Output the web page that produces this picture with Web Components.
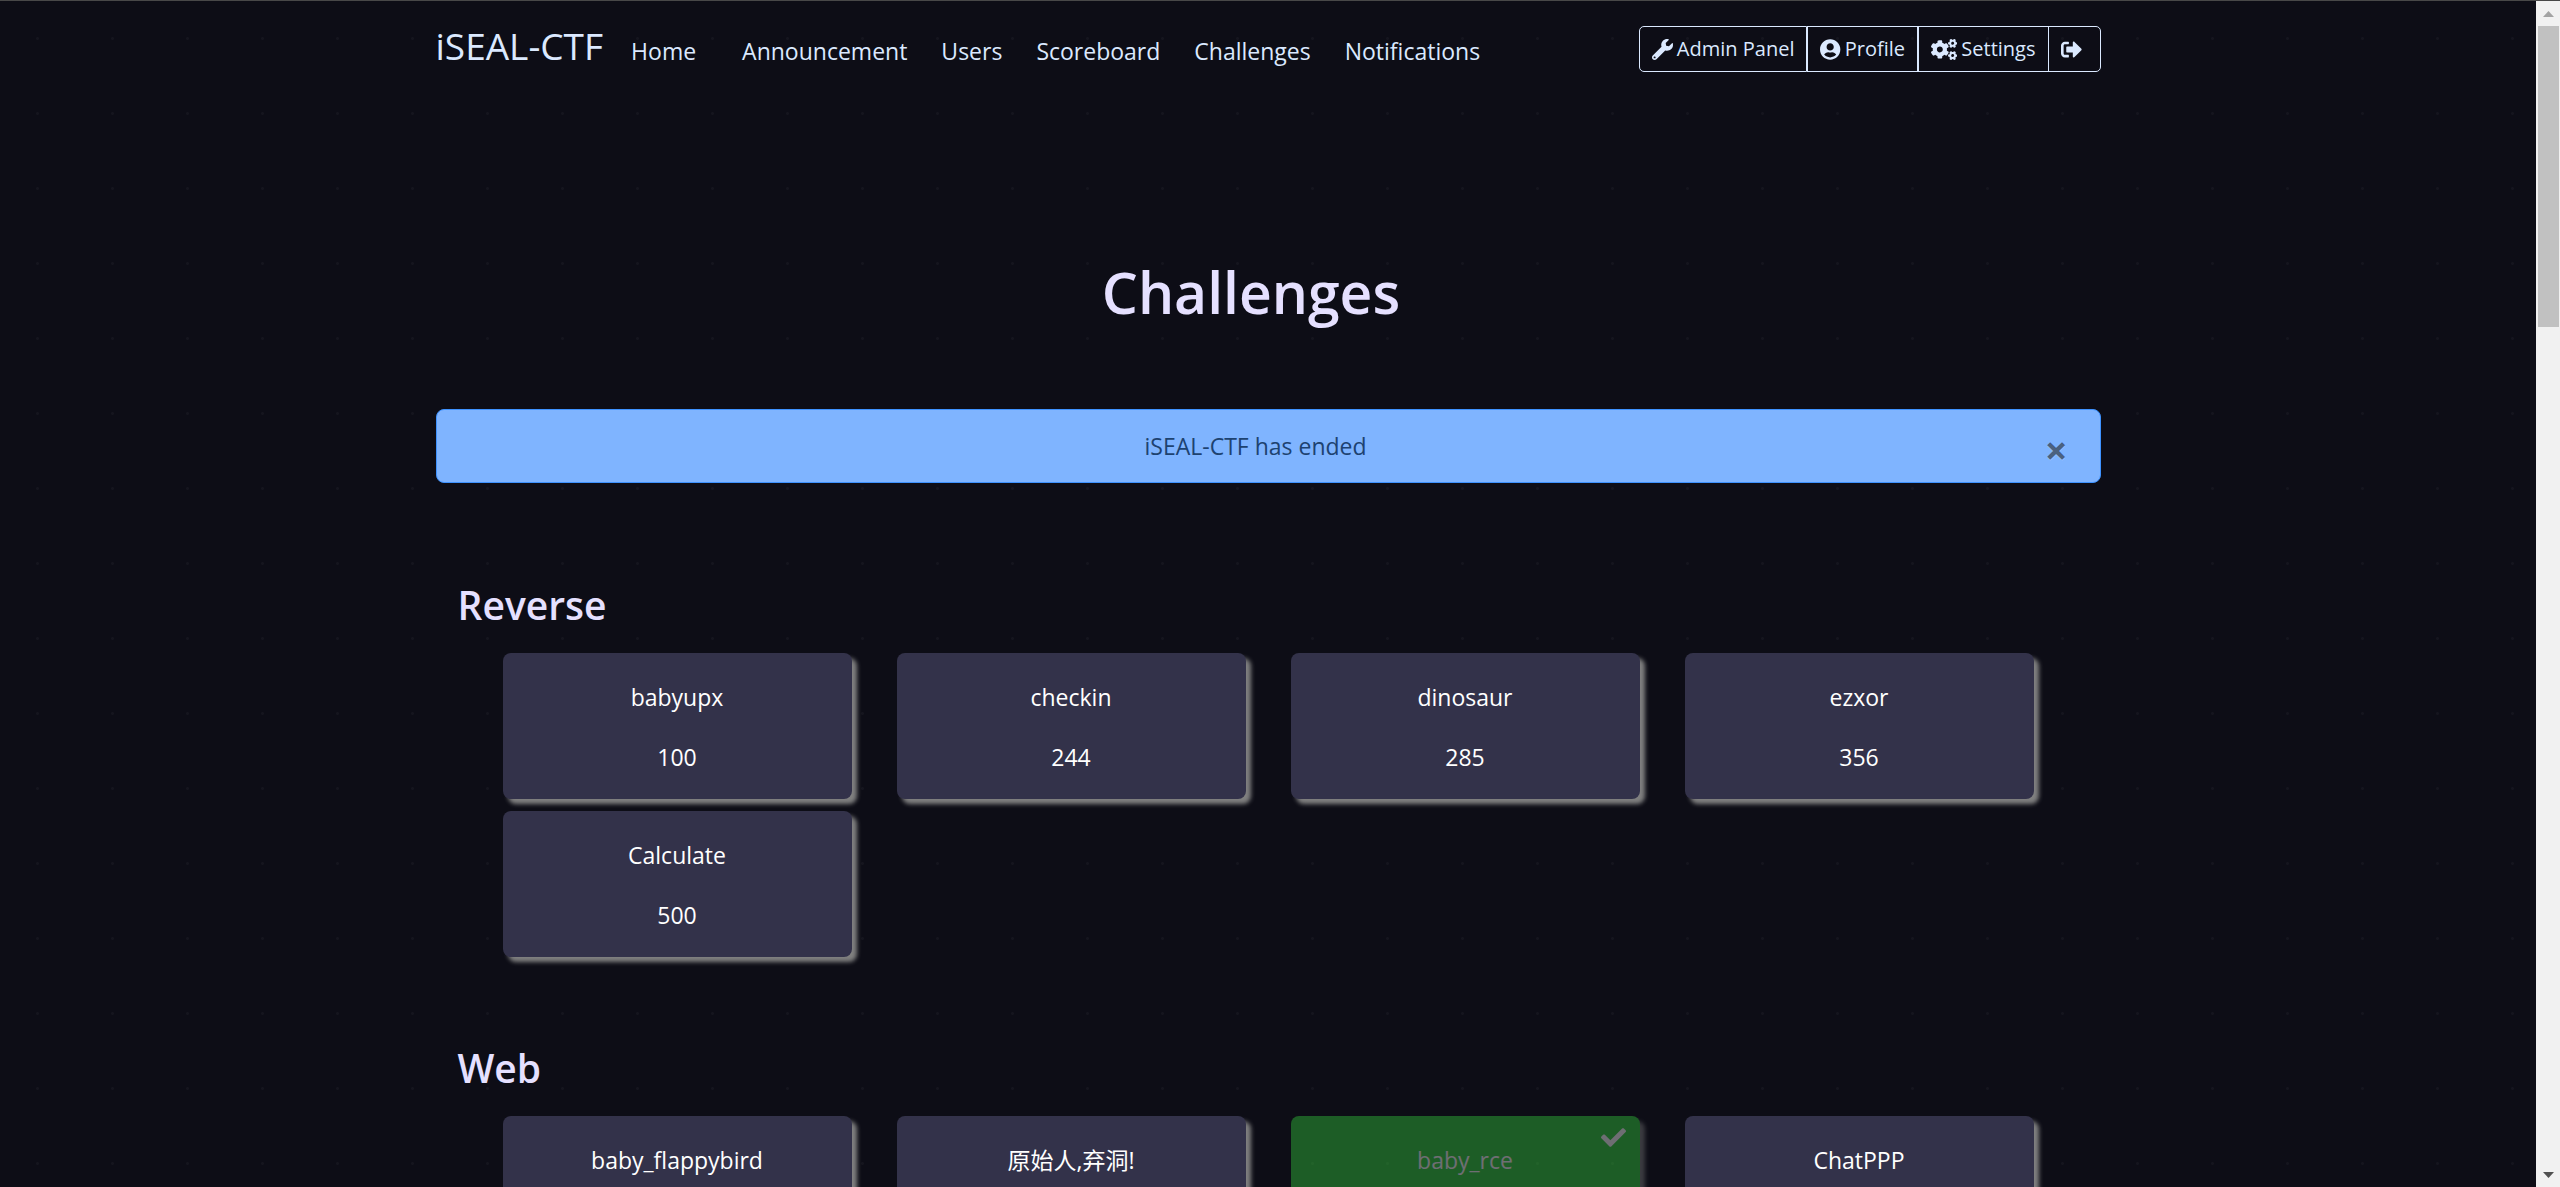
<!DOCTYPE html>
<html lang="en">
<head>
<meta charset="utf-8">
<title>iSEAL-CTF</title>
<style>
    :root {
        --page-bg: #0d0d16;
        --dot: #15151e;
        --link: #dbe9ff;
        --heading: #e5e0ff;
        --card: #33324a;
        --solved: #37d63e;
    }

    body {
        margin: 0;
        height: 100vh;
        overflow: hidden;
        box-sizing: border-box;
        border-top: 1px solid #484848;
        display: flex;
        background: var(--page-bg);
        font: 23px/36px "Open Sans", "Noto Sans CJK SC", sans-serif;
    }

    ctf-page {
        flex: 1;
        min-width: 0;
    }
</style>
</head>
<body>
    <ctf-page>
        <ctf-navbar slot="nav" brand="iSEAL-CTF">
            <nav-link class="first">Home</nav-link>
            <nav-link>Announcement</nav-link>
            <nav-link>Users</nav-link>
            <nav-link>Scoreboard</nav-link>
            <nav-link>Challenges</nav-link>
            <nav-link>Notifications</nav-link>
            <nav-button slot="tools" icon="wrench">Admin Panel</nav-button>
            <nav-button slot="tools" icon="user">Profile</nav-button>
            <nav-button slot="tools" icon="cogs">Settings</nav-button>
            <nav-button slot="tools" icon="logout" label="Logout"></nav-button>
        </ctf-navbar>
        <page-title>Challenges</page-title>
        <alert-box>iSEAL-CTF has ended</alert-box>
        <challenge-category name="Reverse">
            <challenge-card name="babyupx" value="100"></challenge-card>
            <challenge-card name="checkin" value="244"></challenge-card>
            <challenge-card name="dinosaur" value="285"></challenge-card>
            <challenge-card name="ezxor" value="356"></challenge-card>
            <challenge-card name="Calculate" value="500"></challenge-card>
        </challenge-category>
        <challenge-category name="Web">
            <challenge-card name="baby_flappybird"></challenge-card>
            <challenge-card name="原始人,弃洞!"></challenge-card>
            <challenge-card name="baby_rce" solved></challenge-card>
            <challenge-card name="ChatPPP"></challenge-card>
        </challenge-category>
    </ctf-page>
    <scroll-track></scroll-track>

<script>
const ICONS = {
    wrench: [512, 'M507.73 109.1c-2.24-9.03-13.54-12.09-20.12-5.51l-74.36 74.36-67.88-11.31-11.31-67.88 74.36-74.36c6.62-6.62 3.43-17.9-5.66-20.16-47.38-11.74-99.55.91-136.58 37.93-39.64 39.64-50.55 97.1-34.05 147.2L18.74 402.76c-24.99 24.99-24.99 65.51 0 90.5 24.99 24.99 65.51 24.99 90.5 0l213.21-213.21c50.12 16.71 107.47 5.68 147.37-34.22 37.07-37.07 49.7-89.32 37.91-136.73zM64 472c-13.25 0-24-10.75-24-24 0-13.26 10.75-24 24-24s24 10.74 24 24c0 13.25-10.75 24-24 24z'],
    user: [496, 'M248 8C111 8 0 119 0 256s111 248 248 248 248-111 248-248S385 8 248 8zm0 96c48.6 0 88 39.4 88 88s-39.4 88-88 88-88-39.4-88-88 39.4-88 88-88zm0 344c-58.7 0-111.3-26.6-146.5-68.2 18.8-35.4 55.6-59.8 98.5-59.8 2.4 0 4.8.4 7.1 1.1 13 4.2 26.6 6.9 40.9 6.9 14.3 0 28-2.7 40.9-6.9 2.3-.7 4.7-1.1 7.1-1.1 42.9 0 79.7 24.4 98.5 59.8C359.3 421.4 306.7 448 248 448z'],
    cogs: [640, 'M512.1 191l-8.2 14.3c-3 5.3-9.4 7.5-15.1 5.4-11.8-4.4-22.6-10.7-32.1-18.6-4.6-3.8-5.8-10.5-2.8-15.7l8.2-14.3c-6.9-8-12.3-17.3-15.9-27.4h-16.5c-6 0-11.2-4.3-12.2-10.3-2-12-2.1-24.6 0-37.1 1-6 6.2-10.4 12.2-10.4h16.5c3.6-10.1 9-19.4 15.9-27.4l-8.2-14.3c-3-5.2-1.9-11.9 2.8-15.7 9.5-7.9 20.4-14.2 32.1-18.6 5.7-2.1 12.1.1 15.1 5.4l8.2 14.3c10.5-1.9 21.2-1.9 31.7 0L552 6.3c3-5.3 9.4-7.5 15.1-5.4 11.8 4.4 22.6 10.7 32.1 18.6 4.6 3.8 5.8 10.5 2.8 15.7l-8.2 14.3c6.9 8 12.3 17.3 15.9 27.4h16.5c6 0 11.2 4.3 12.2 10.3 2 12 2.1 24.6 0 37.1-1 6-6.2 10.4-12.2 10.4h-16.5c-3.6 10.1-9 19.4-15.9 27.4l8.2 14.3c3 5.2 1.9 11.9-2.8 15.7-9.5 7.9-20.4 14.2-32.1 18.6-5.7 2.1-12.1-.1-15.1-5.4l-8.2-14.3c-10.4 1.9-21.2 1.9-31.7 0zm-10.5-58.8c38.5 29.6 82.4-14.3 52.8-52.8-38.5-29.7-82.4 14.3-52.8 52.8zM386.3 286.1l33.7 16.8c10.1 5.8 14.5 18.1 10.5 29.1-8.9 24.2-26.4 46.4-42.6 65.8-7.4 8.9-20.2 11.1-30.3 5.3l-29.1-16.8c-16 13.7-34.6 24.6-54.9 31.7v33.6c0 11.6-8.3 21.6-19.7 23.6-24.6 4.2-50.4 4.4-75.9 0-11.5-2-20-11.9-20-23.6V418c-20.3-7.2-38.9-18-54.9-31.7L74 403c-10 5.8-22.9 3.6-30.3-5.3-16.2-19.4-33.3-41.6-42.2-65.7-4-10.9.4-23.2 10.5-29.1l33.3-16.8c-3.9-20.9-3.9-42.4 0-63.4L12 205.8c-10.1-5.8-14.6-18.1-10.5-29 8.9-24.2 26-46.4 42.2-65.8 7.4-8.9 20.2-11.1 30.3-5.3l29.1 16.8c16-13.7 34.6-24.6 54.9-31.7V57.1c0-11.5 8.2-21.5 19.6-23.5 24.6-4.2 50.5-4.4 76-.1 11.5 2 20 11.9 20 23.6v33.6c20.3 7.2 38.9 18 54.9 31.7l29.1-16.8c10-5.8 22.9-3.6 30.3 5.3 16.2 19.4 33.2 41.6 42.1 65.8 4 10.9.1 23.2-10 29.1l-33.7 16.8c3.9 21 3.9 42.5 0 63.5zm-117.6 21.1c59.2-77-28.7-164.9-105.7-105.7-59.2 77 28.7 164.9 105.7 105.7zm243.4 182.7l-8.2 14.3c-3 5.3-9.4 7.5-15.1 5.4-11.8-4.4-22.6-10.7-32.1-18.6-4.6-3.8-5.8-10.5-2.8-15.7l8.2-14.3c-6.9-8-12.3-17.3-15.9-27.4h-16.5c-6 0-11.2-4.3-12.2-10.3-2-12-2.1-24.6 0-37.1 1-6 6.2-10.4 12.2-10.4h16.5c3.6-10.1 9-19.4 15.9-27.4l-8.2-14.3c-3-5.2-1.9-11.9 2.8-15.7 9.5-7.9 20.4-14.2 32.1-18.6 5.7-2.1 12.1.1 15.1 5.4l8.2 14.3c10.5-1.9 21.2-1.9 31.7 0l8.2-14.3c3-5.3 9.4-7.5 15.1-5.4 11.8 4.4 22.6 10.7 32.1 18.6 4.6 3.8 5.8 10.5 2.8 15.7l-8.2 14.3c6.9 8 12.3 17.3 15.9 27.4h16.5c6 0 11.2 4.3 12.2 10.3 2 12 2.1 24.6 0 37.1-1 6-6.2 10.4-12.2 10.4h-16.5c-3.6 10.1-9 19.4-15.9 27.4l8.2 14.3c3 5.2 1.9 11.9-2.8 15.7-9.5 7.9-20.4 14.2-32.1 18.6-5.7 2.1-12.1-.1-15.1-5.4l-8.2-14.3c-10.4 1.9-21.2 1.9-31.7 0zM501.6 431c38.5 29.6 82.4-14.3 52.8-52.8-38.5-29.6-82.4 14.3-52.8 52.8z'],
    logout: [512, 'M497 273L329 441c-15 15-41 4.5-41-17v-96H152c-13.3 0-24-10.7-24-24v-96c0-13.3 10.7-24 24-24h136V88c0-21.4 25.9-32 41-17l168 168c9.3 9.4 9.3 24.6 0 34zM192 436v-40c0-6.6-5.4-12-12-12H96c-17.7 0-32-14.3-32-32V160c0-17.7 14.3-32 32-32h84c6.6 0 12-5.4 12-12V76c0-6.6-5.4-12-12-12H96c-53 0-96 43-96 96v192c0 53 43 96 96 96h84c6.6 0 12-5.4 12-12z'],
    check: [512, 'M173.898 439.404l-166.4-166.4c-9.997-9.997-9.997-26.206 0-36.204l36.203-36.204c9.997-9.998 26.207-9.998 36.204 0L192 312.69 432.095 72.596c9.997-9.997 26.207-9.997 36.204 0l36.203 36.204c9.997 9.997 9.997 26.206 0 36.204l-294.4 294.401c-9.998 9.997-26.207 9.997-36.204-.001z']
};

function icon(name) {
    const [width, path] = ICONS[name];
    return `<svg viewBox="0 0 ${width} 512" fill="currentColor" aria-hidden="true"><path d="${path}"/></svg>`;
}

class BaseElement extends HTMLElement {
    constructor() {
        super();
        this.attachShadow({ mode: 'open' });
    }

    connectedCallback() {
        this.shadowRoot.innerHTML = this.template();
    }
}

class CtfPage extends BaseElement {
    template() {
        return `
            <style>
                :host {
                    display: block;
                    /* one faint dot in the middle of every tile */
                    background: radial-gradient(circle, var(--dot) 1px, transparent 2px) 0 0 / 75px 75px;
                }
                .container {
                    max-width: 1665px;
                    margin: 0 auto;
                    padding: 0 22px;
                }
            </style>
            <div class="container">
                <slot name="nav"></slot>
                <main><slot></slot></main>
            </div>
        `;
    }
}

class CtfNavbar extends BaseElement {
    template() {
        return `
            <style>
                :host { display: block; }
                header {
                    display: flex;
                    justify-content: space-between;
                    align-items: flex-start;
                    padding: 18px 0;
                    color: var(--link);
                }
                nav {
                    display: flex;
                    align-items: baseline;
                    gap: 28px;
                }
                .brand {
                    font-size: 37px;
                    line-height: 54px;
                    color: inherit;
                    text-decoration: none;
                }
                .links { display: flex; gap: 34px; }
                .tools { display: flex; margin-top: 7px; }
            </style>
            <header>
                <nav>
                    <a class="brand" href="#">${this.getAttribute('brand')}</a>
                    <div class="links"><slot></slot></div>
                </nav>
                <div class="tools"><slot name="tools"></slot></div>
            </header>
        `;
    }
}

class NavLink extends BaseElement {
    template() {
        return `
            <style>
                :host { display: block; }
                :host(.first) { margin-right: 12px; }
                a { color: inherit; text-decoration: none; }
            </style>
            <a href="#"><slot></slot></a>
        `;
    }
}

class NavButton extends BaseElement {
    template() {
        const label = this.getAttribute('label');
        return `
            <style>
                :host { display: block; }
                a {
                    display: flex;
                    align-items: center;
                    gap: 4px;
                    box-sizing: border-box;
                    height: 46px;
                    padding: 0 12px;
                    border: 1px solid var(--link);
                    color: inherit;
                    font-size: 20px;
                    line-height: 32px;
                    text-decoration: none;
                }
                svg { display: block; height: 21px; }
                :host(:first-of-type) a { border-radius: 5px 0 0 5px; }
                :host(:last-of-type) { margin-left: -1px; }
                :host(:last-of-type) a { border-radius: 0 5px 5px 0; padding-right: 18px; }
            </style>
            <a href="#" ${label ? `aria-label="${label}"` : ''}>${icon(this.getAttribute('icon'))}${label ? '' : '<span><slot></slot></span>'}</a>
        `;
    }
}

class PageTitle extends BaseElement {
    template() {
        return `
            <style>
                :host { display: block; padding: 165px 34px 81px 0; }
                h1 {
                    margin: 0;
                    color: var(--heading);
                    font-size: 57px;
                    line-height: 72px;
                    font-weight: 600;
                    text-align: center;
                }
            </style>
            <h1><slot></slot></h1>
        `;
    }
}

class AlertBox extends BaseElement {
    template() {
        return `
            <style>
                :host {
                    display: flex;
                    align-items: flex-start;
                    margin-bottom: 11px;
                    padding: 18px 32px 18px 30px;
                    border: 1px solid #3e92ff;
                    border-radius: 8px;
                    background: #7fb4ff;
                    color: #1d4270;
                }
                span { flex: 1; text-align: center; }
                button {
                    margin: 0 0 -8px;
                    padding: 0;
                    border: 0;
                    background: none;
                    color: rgba(0, 0, 0, .5);
                    font: 700 40px/44px "Open Sans", sans-serif;
                    text-shadow: 0 1px 0 rgba(255, 255, 255, .2);
                }
            </style>
            <span role="alert"><slot></slot></span>
            <button type="button" aria-label="Close">×</button>
        `;
    }

    connectedCallback() {
        super.connectedCallback();
        this.shadowRoot.querySelector('button').addEventListener('click', () => this.remove());
    }
}

class ChallengeCategory extends BaseElement {
    template() {
        return `
            <style>
                :host { display: block; padding: 86px 22px 0; }
                h3 {
                    margin: 0 0 23px;
                    color: var(--heading);
                    font-size: 39px;
                    line-height: 50px;
                    font-weight: 600;
                }
                .grid {
                    display: grid;
                    grid-template-columns: repeat(4, 1fr);
                    gap: 12px 45px;
                    padding: 0 45px;
                }
            </style>
            <h3>${this.getAttribute('name')}</h3>
            <div class="grid"><slot></slot></div>
        `;
    }
}

class ChallengeCard extends BaseElement {
    template() {
        const solved = this.hasAttribute('solved');
        return `
            <style>
                :host { display: block; position: relative; }
                button {
                    display: block;
                    width: 100%;
                    min-height: 146px;
                    padding: 26px 12px 0;
                    border: 0;
                    border-radius: 8px;
                    background: var(--card);
                    box-shadow: 5px 5px 4px #808080;
                    color: #fff;
                    font: inherit;
                    text-align: center;
                }
                p { margin: 0 0 24px; min-height: 36px; }
                :host([solved]) { opacity: .4; }
                :host([solved]) button { background: var(--solved); }
                svg {
                    position: absolute;
                    top: 9px;
                    right: 14px;
                    width: 25px;
                    color: #fff;
                }
            </style>
            <button type="button">
                <p>${this.getAttribute('name')}</p>
                <p>${this.getAttribute('value') || ''}</p>
            </button>
            ${solved ? icon('check') : ''}
        `;
    }
}

class ScrollTrack extends BaseElement {
    template() {
        return `
            <style>
                :host {
                    display: flex;
                    flex-direction: column;
                    width: 24px;
                    background: #f1f1f1;
                }
                svg { display: block; width: 24px; height: 25px; }
                .rail { flex: 1; padding: 0 1px 0 2px; }
                .thumb { height: 26.5%; background: #c1c1c1; }
            </style>
            <svg viewBox="0 0 24 25" fill="#a3a3a3"><path d="M7 16h11l-5.5-6z"/></svg>
            <div class="rail"><div class="thumb"></div></div>
            <svg viewBox="0 0 24 25" fill="#505050"><path d="M7 10h11l-5.5 6z"/></svg>
        `;
    }
}

customElements.define('ctf-page', CtfPage);
customElements.define('ctf-navbar', CtfNavbar);
customElements.define('nav-link', NavLink);
customElements.define('nav-button', NavButton);
customElements.define('page-title', PageTitle);
customElements.define('alert-box', AlertBox);
customElements.define('challenge-category', ChallengeCategory);
customElements.define('challenge-card', ChallengeCard);
customElements.define('scroll-track', ScrollTrack);
</script>
</body>
</html>
